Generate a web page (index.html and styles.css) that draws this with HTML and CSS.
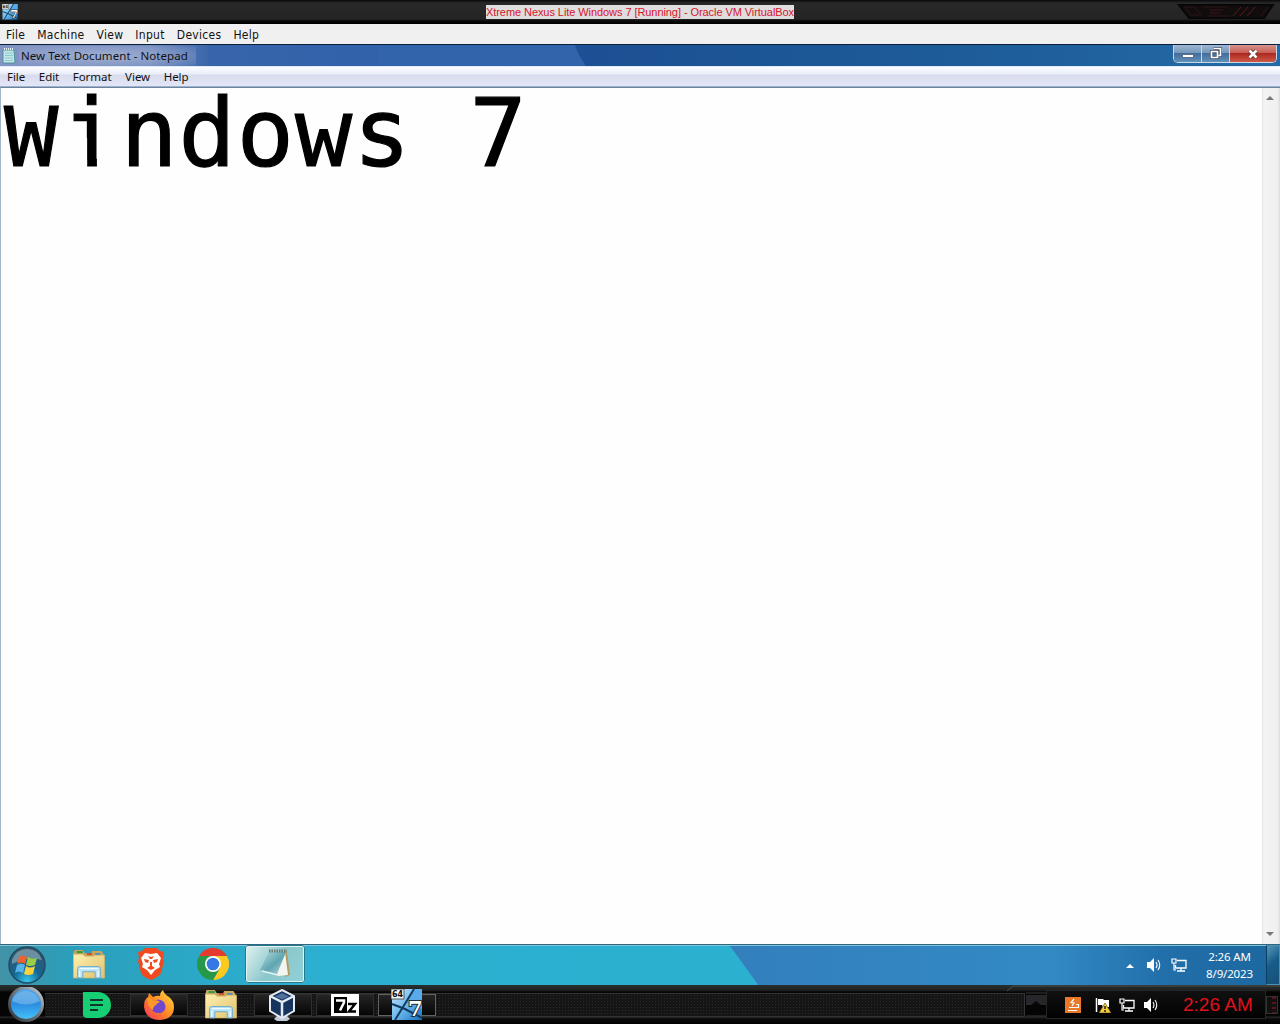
FILE: index.html
```html
<!DOCTYPE html>
<html lang="en">
<head>
    <meta charset="UTF-8">
    <title>Xtreme Nexus Lite Windows 7 [Running] - Oracle VM VirtualBox</title>
    <link rel="stylesheet" href="styles.css">
</head>
<body>
    <!-- Shared icons -->
    <svg class="defs" width="0" height="0">
        <defs>
            <linearGradient id="folder" x1="0" y1="0" x2="1" y2="1">
                <stop offset="0" stop-color="#fff0ae"/><stop offset="1" stop-color="#dfc170"/>
            </linearGradient>
            <linearGradient id="vm" x1="0" y1="0" x2="1" y2="1">
                <stop offset="0" stop-color="#c4e6fb"/><stop offset=".5" stop-color="#6db9ee"/><stop offset="1" stop-color="#1670bd"/>
            </linearGradient>
            <radialGradient id="orb" cx=".5" cy=".95" r=".9">
                <stop offset="0" stop-color="#35c8ef"/><stop offset=".45" stop-color="#146391"/><stop offset="1" stop-color="#37576b"/>
            </radialGradient>
            <linearGradient id="ball" x1="0" y1="0" x2="0" y2="1">
                <stop offset="0" stop-color="#5aa9e8"/><stop offset=".5" stop-color="#2c8de0"/><stop offset="1" stop-color="#48c6fa"/>
            </linearGradient>
            <linearGradient id="ring" x1="0" y1="1" x2="1" y2="0">
                <stop offset="0" stop-color="#2c3339"/><stop offset=".6" stop-color="#777f85"/><stop offset="1" stop-color="#d2d2d2"/>
            </linearGradient>
            <linearGradient id="fire" x1="1" y1="0" x2="0" y2="1">
                <stop offset="0" stop-color="#ffe34a"/><stop offset=".5" stop-color="#ff8a23"/><stop offset="1" stop-color="#f5325b"/>
            </linearGradient>
            <linearGradient id="pad" x1="0" y1="0" x2="1" y2="1">
                <stop offset="0" stop-color="#b4dfe2"/><stop offset=".55" stop-color="#5fa5b0"/><stop offset="1" stop-color="#b4d9dc"/>
            </linearGradient>
            <symbol id="explorer" viewBox="0 0 32 30">
                <path d="M1 4l1-3h8l2 3h6l1-2h9l2 3v23H1z" fill="#c9a65a"/>
                <path d="M4 2h6v2H4z" fill="#2f9a47"/><path d="M14 4h5v2h-5z" fill="#d34b32"/><path d="M22 4h5v2h-5z" fill="#4489c9"/>
                <path d="M1 5h9l2 2h8l2-1h9v22H1z" fill="url(#folder)" stroke="#d5b76c" stroke-width=".7"/>
                <path d="M5 28v-9q0-2 2-2h18q2 0 2 2v9h-5v-6H10v6z" fill="#b9e3f6" stroke="#66a9d0" stroke-width=".9"/>
                <path d="M7 19h18M7 21v6M25 21v6" stroke="#eefaff" stroke-width="1.3" fill="none"/>
            </symbol>
            <symbol id="speaker" viewBox="0 0 16 14">
                <path d="M1 4h3l4-4v14l-4-4H1z" fill="#fff"/>
                <path d="M10 4q2 3 0 6M12 2q3.5 5 0 10" fill="none" stroke="#fff" stroke-width="1.1"/>
            </symbol>
            <symbol id="network" viewBox="0 0 16 14">
                <path d="M6 2.500h9v7.500H4.500V7M10 10v3M6 13h8" fill="none" stroke="#fff" stroke-width="1.3"/>
                <path d="M1 1h4v4H1zM3 5v7h2" fill="none" stroke="#fff" stroke-width="1.2"/>
            </symbol>
            <symbol id="vmtile" viewBox="0 0 32 32">
                <path d="M1 0h30v31H1z" fill="url(#vm)"/>
                <path d="M23 0h8v20l-16-6z" fill="#58abe8"/>
                <path d="M23 0L12 18 4 31M1 15l13 5 17 9" stroke="#123b61" stroke-width="2" fill="none"/>
                <path d="M0 0h13v10H0z" fill="#f5f5f5" stroke="#555"/>
                <text x="1" y="8.300" class="bits">64</text>
                <text x="17" y="27" class="seven">7</text>
            </symbol>
        </defs>
    </svg>

    <div class="host-title">
        <svg class="host-icon" width="16" height="16"><use href="#vmtile"/></svg>
        <span class="caption">Xtreme Nexus Lite Windows 7 [Running] - Oracle VM VirtualBox</span>
        <svg class="host-buttons" width="103" height="18" viewBox="0 0 103 18" fill="none">
            <path d="M2 2h94l-9 13H12z" fill="#120d0d" stroke="#080808" stroke-width="2"/>
            <path d="M8 4l6 8h10l-7-8zM26 4h24M31 13h22M91 4l-7 9" stroke="#2d1518"/>
            <path d="M33 7h13M33 10h10" stroke="#3f171b"/>
            <path d="M56 13l8-9M63 13l8-9M70 13l8-9" stroke="#5c171c"/>
        </svg>
    </div>
    <div class="host-menu">
        <span>File</span><span>Machine</span><span>View</span><span>Input</span><span>Devices</span><span>Help</span>
    </div>

    <div class="np-title">
        <svg class="np-icon" width="14" height="16" viewBox="0 0 14 16">
            <path d="M1 2h11l1 13H1z" fill="#c3e7e9" stroke="#528f9d"/>
            <path d="M3 5h8M3 7.500h8M3 10h8M3 12.500h8" stroke="#8cc8ce"/>
            <path d="M2 1h10" stroke="#e6f5f2" stroke-width="2" stroke-dasharray="1 1"/>
        </svg>
        <span class="np-caption">New Text Document - Notepad</span>
        <svg class="np-shape" width="210" height="21">
            <path d="M0 0h197q3 10 11 21H0z" fill="#3264ab"/>
        </svg>
        <div class="np-buttons">
            <span class="btn"><svg width="12" height="12"><path d="M.5 6.500h11v3H.5z" fill="#fff" stroke="#4b5b70" stroke-width=".8"/></svg></span>
            <span class="btn"><svg width="14" height="14"><path d="M4.500 1.500h7v7h-2M2.500 4.500h6v6h-6z" fill="none" stroke="#3c4e64" stroke-width="3"/><path d="M4.500 1.500h7v7h-2M2.500 4.500h6v6h-6z" fill="none" stroke="#fff" stroke-width="1.700"/></svg></span>
            <span class="btn close"><svg width="14" height="12"><path d="M3.500 2.500l7 7M10.500 2.500l-7 7" stroke="#5c3436" stroke-width="4"/><path d="M3.500 2.500l7 7M10.500 2.500l-7 7" stroke="#fff" stroke-width="2.500"/></svg></span>
        </div>
    </div>
    <div class="np-menu">
        <span>File</span><span>Edit</span><span>Format</span><span>View</span><span>Help</span>
    </div>
    <div class="np-body">
        <div class="text"><span class="cap">W</span><span class="stem">i</span>ndows 7</div>
        <div class="scrollbar">
            <svg width="8" height="5"><path d="M0 5l4-4 4 4z" fill="#777"/></svg>
            <svg width="8" height="5"><path d="M0 0l4 4 4-4z" fill="#777"/></svg>
        </div>
    </div>

    <div class="guest-bar">
        <svg class="start" width="38" height="38" viewBox="0 0 38 38">
            <circle cx="19" cy="19" r="18" fill="url(#orb)" stroke="#214b63" stroke-width="1.500"/>
            <path d="M4 14Q8 3 19 3t15 11Q19 10 4 18z" fill="#b8d1da" opacity=".45"/>
            <path d="M11 11q4-3 8 0l-2 7q-4-3-8 0z" fill="#ed6330"/>
            <path d="M20 11q4 3 9 1l-2 7q-5 2-9 0z" fill="#9ccc42"/>
            <path d="M9 19q4-3 8 0l-2 8q-4-3-8 0z" fill="#57b3e8"/>
            <path d="M18 20q4 3 9 0l-2 8q-5 2-9 0z" fill="#fbd13c"/>
        </svg>
        <div class="tasks">
            <span class="task"><svg width="34" height="31"><use href="#explorer"/></svg></span>
            <span class="task">
                <svg width="28" height="32" viewBox="0 0 28 32">
                    <path d="M8 0h12l3 3 4 1-1 6 1 3-3 12q-2 4-10 7-8-3-10-7L1 13l1-3-1-6 4-1z" fill="#f04a20"/>
                    <path d="M8 5l6 1 6-1 4 5-2 6 1 3-5 3-4 5-4-5-5-3 1-3-2-6z" fill="#fff"/>
                    <path d="M7 11l5 1-1 3-3-1zM21 11l-5 1 1 3 3-1zM10 20l3-2v-4h2v4l3 2-4 2zM11 8l3 1 3-1-2 3h-2z" fill="#f04a20"/>
                </svg>
            </span>
            <span class="task">
                <svg width="32" height="32" viewBox="0 0 32 32">
                    <path d="M16 16L2.140 8A16 16 0 0 1 29.860 8z" fill="#e33b2e"/>
                    <path d="M16 16V8h13.860A16 16 0 0 1 16 32l7-12z" fill="#fcc91f"/>
                    <path d="M2.140 8A16 16 0 0 0 16 32l6.930-12L16 16 9.070 20z" fill="#279847"/>
                    <path d="M2.140 8L9.070 20 16 8z" fill="#279847"/>
                    <circle cx="16" cy="16" r="8" fill="#fff"/><circle cx="16" cy="16" r="6.300" fill="#3478e5"/>
                </svg>
            </span>
            <span class="task active">
                <svg width="34" height="32" viewBox="0 0 34 32">
                    <path d="M27 4h2l3 23-5 2z" fill="#b39c64"/>
                    <path d="M27 4l3 23-10 1-1-4z" fill="#f3f6ef"/>
                    <path d="M11 4h17l-9 22L2 22z" fill="url(#pad)"/>
                    <path d="M11 3h18" stroke="#68796f" stroke-width="3" stroke-dasharray="1.500 1"/>
                    <path d="M4 23l16 4" stroke="#e4f3f3" stroke-width="1.500"/>
                </svg>
            </span>
        </div>
        <svg class="wedge" width="550" height="40"><path d="M0 0h550v40H29z" fill="url(#wall)"/>
            <defs><linearGradient id="wall"><stop offset="0" stop-color="#337fbd"/><stop offset=".58" stop-color="#328ac4"/><stop offset=".8" stop-color="#216ea9"/><stop offset="1" stop-color="#1c679f"/></linearGradient></defs>
        </svg>
        <div class="tray">
            <svg width="8" height="5"><path d="M0 5l4-4 4 4z" fill="#fff"/></svg>
            <svg width="16" height="14"><use href="#speaker"/></svg>
            <svg width="16" height="14"><use href="#network"/></svg>
            <div class="clock"><span>2:26 AM</span><span>8/9/2023</span></div>
            <div class="show-desktop"></div>
        </div>
    </div>

    <div class="host-bar">
        <svg class="host-start" width="38" height="36" viewBox="0 0 38 36">
            <circle cx="19" cy="17" r="16.500" fill="url(#ball)" stroke="url(#ring)" stroke-width="3"/>
            <path d="M5 14Q9 4 19 4t14 10q-14 7-28 0z" fill="#8cc3ee" opacity=".5"/>
        </svg>
        <div class="strip">
            <span class="slot plain">
                <svg width="30" height="28" viewBox="0 0 30 28">
                    <path d="M1 1h15a13 13 0 0 1 0 26H5q-4 0-4-4z" fill="#16cf74"/>
                    <path d="M8 9h13M8 14h13M8 19h8" stroke="#10382a" stroke-width="2"/>
                </svg>
            </span>
            <span class="slot">
                <svg width="32" height="32" viewBox="0 0 32 32">
                    <path d="M5 8l1-4 4 4q4-2 7-1 0-4 3-6 1 4 6 7 5 4 5 10 0 12-14 13Q3 31 1 18 1 10 5 8z" fill="url(#fire)"/>
                    <path d="M10 13q5-5 11 0 4 8-3 11-10 1-10-7z" fill="#7048cf"/>
                    <path d="M4 9q5 0 6 3 4-2 7 1-3 1-4 3-3 1-3 5-5-2-6-12z" fill="#ff9827"/>
                </svg>
            </span>
            <span class="slot plain"><svg width="34" height="31"><use href="#explorer"/></svg></span>
            <span class="slot">
                <svg class="vbox" width="28" height="32" viewBox="0 0 28 32">
                    <path d="M9 27h10l3 3-3 2H9l-3-2z" fill="#c0cbd6"/>
                    <path d="M14 1l12 6v15l-12 7-12-7V7z" fill="#17345f" stroke="#e3eaf1" stroke-width="2"/>
                    <path d="M2 7l12 6 12-6M14 13v16" fill="none" stroke="#e3eaf1" stroke-width="2.500"/>
                    <path d="M14 4l7 3.500-7 3-7-3z" fill="#4f719d"/>
                </svg>
            </span>
            <span class="slot">
                <svg width="28" height="22" viewBox="0 0 28 22">
                    <path d="M0 0h28v22H0z" fill="#fff"/><path d="M3 3h13v16H3z" fill="#000"/>
                    <path d="M17 10h7l-6 7.500h7" fill="none" stroke="#000" stroke-width="2.500"/>
                    <path d="M5 6.500h8v2l-4 8" fill="none" stroke="#fff" stroke-width="2.500"/>
                </svg>
            </span>
            <span class="slot current"><svg width="32" height="32"><use href="#vmtile"/></svg></span>
        </div>
        <svg class="gap-art" width="20" height="26" viewBox="0 0 20 26"><path d="M0 1h20M0 24h20" stroke="#39393b"/><path d="M0 3h20v10H0z" fill="#27272b"/><path d="M4 14l6-5 6 5z" fill="#070707"/></svg>
        <div class="host-tray">
            <svg width="16" height="16"><path d="M0 0h16v16H0z" fill="#e97828"/><path d="M9 2L6 5.500l3 .5-2 3M4 10.500h7M3 13.500h9M11 7.500h2.500v3H11" fill="none" stroke="#fff" stroke-width="1.200"/></svg>
            <svg width="16" height="16"><path d="M1.500 1v14" stroke="#fff" stroke-width="1.500"/><path d="M3 2h5l1 1h5v7H8L7 8H3z" fill="#fff"/><path d="M10 6l6 10H4z" fill="#f5ca3c" stroke="#75601b" stroke-width=".7"/><path d="M10 9v3M10 13v2" stroke="#222" stroke-width="1.500"/></svg>
            <svg width="16" height="14"><use href="#network"/></svg>
            <svg width="16" height="14"><use href="#speaker"/></svg>
            <span class="host-clock">2:26 AM</span>
        </div>
        <div class="host-end"></div>
        <svg class="notch" width="290" height="7" viewBox="0 0 290 7"><path d="M0 6l6-5h284" fill="none" stroke="#4b504e"/></svg>
    </div>
</body>
</html>
```

FILE: styles.css
```css
body {
    margin: 0;
    width: 1280px;
    height: 1024px;
    display: flex;
    flex-direction: column;
    overflow: hidden;
    background-color: #fefefe;
    font-family: "Noto Sans", "Open Sans", sans-serif;
    font-size: 12px;
    color: #111;
}

* {
    box-sizing: border-box;
}

svg {
    display: block;
    flex-shrink: 0;
}

.defs {
    position: absolute;
}

.seven {
    font: bold 21px "DejaVu Serif", serif;
    fill: #fff;
    stroke: #1b2c3c;
    stroke-width: 2px;
    paint-order: stroke;
}

.bits {
    font: bold 8px "DejaVu Sans", sans-serif;
    fill: #111;
}

/* Host window */
.host-title {
    height: 24px;
    display: grid;
    grid-template-columns: 1fr auto 1fr;
    align-items: center;
    padding: 0 0 0 2px;
    background: linear-gradient(#080808, #282828 3px, #252525 19px, #080808 21px, #000);
}

.caption {
    font: 11px/14px "Liberation Sans", Arial, sans-serif;
    width: 308px;
    margin-left: -2px;
    white-space: nowrap;
    letter-spacing: -0.07px;
    color: #d9142c;
    background-color: #dedede;
}

.host-buttons {
    justify-self: end;
}

.host-menu {
    height: 20px;
    display: flex;
    gap: 12px;
    padding-left: 6px;
    background-color: #f1f0f0;
    font-family: "DejaVu Sans Condensed", "DejaVu Sans", sans-serif;
    font-stretch: condensed;
    line-height: 22px;
    letter-spacing: 0.3px;
}

/* Notepad */
.np-title {
    position: relative;
    height: 22px;
    display: flex;
    align-items: center;
    padding-left: 2px;
    border-top: 1px solid #0b1e3b;
    background: linear-gradient(90deg, #8295c3 0, #7189bc 150px, #3865aa 210px, #3162aa 370px, #1c5094 590px, #1d5c97 960px, #246aa6);
}

.np-shape {
    position: absolute;
    left: 378px;
    top: 0;
}

.np-icon {
    z-index: 1;
}

.np-caption {
    margin-left: 3px;
    padding: 0 8px 0 2px;
    font-size: 11.5px;
    line-height: 20px;
    letter-spacing: 0.06px;
    background: radial-gradient(ellipse, rgba(178, 189, 218, 0.7), rgba(140, 160, 203, 0.1));
}

.np-buttons {
    display: flex;
    align-self: flex-start;
    height: 18px;
    margin: 0 3px 0 auto;
    border: 1px solid #c7d8e8;
    border-top: 0;
    border-radius: 0 0 5px 5px;
    overflow: hidden;
    z-index: 1;
}

.btn {
    width: 28px;
    display: flex;
    align-items: center;
    justify-content: center;
    border-right: 1px solid #c7d8e8;
    background: linear-gradient(#9db7d2, #7798bb 45%, #436d9c 50%, #6291b9);
}

.btn.close {
    width: 46px;
    border-right: 0;
    background: linear-gradient(#d6948d, #c85f55 45%, #ad2920 50%, #cf5947);
}

.np-menu {
    height: 21px;
    display: flex;
    gap: 13.6px;
    padding-left: 7px;
    border-top: 1px solid #dfe9f8;
    background: linear-gradient(#fcfdff, #e9edf8 7px, #d8dced 8px, #e3e6f6);
    border-bottom: 1px solid #9bb1cc;
    font-size: 11.5px;
    line-height: 20px;
    letter-spacing: -0.05px;
}

.np-body {
    height: 857px;
    display: flex;
    justify-content: space-between;
    border-left: 1px solid #9fb5c8;
    border-top: 1px solid #6c829d;
    background-color: #fefefe;
}

.text {
    padding-left: 3px;
    font: 95px/91px "DejaVu Sans Mono", monospace;
    letter-spacing: 1px;
    -webkit-text-stroke: 1.2px #000;
    color: #000;
    white-space: pre;
}

/* Low capital sitting on the same baseline */
.cap {
    display: inline-block;
    transform: scale(0.95, 0.86);
    transform-origin: 0 79px;
}

/* Plain stem, the foot is cut away */
.stem {
    display: inline-block;
    clip-path: polygon(0 -10px, 34.7px -10px, 34.7px 100%, 25px 100%, 25px 50px, 0 50px);
}

.scrollbar {
    width: 18px;
    display: flex;
    flex-direction: column;
    align-items: center;
    justify-content: space-between;
    padding: 7px 2px 7px 0;
    background: linear-gradient(90deg, #e5e5e5, #f3f3f3 2px, #efefef 16px, #d8e0e5 17px);
}

/* Guest taskbar */
.guest-bar {
    position: relative;
    height: 41px;
    display: flex;
    align-items: center;
    padding-left: 8px;
    border-top: 1px solid #32667e;
    box-shadow: inset 0 1px #7fc5da;
    background: linear-gradient(90deg, #4292a7, #2a9fbc 75px, #2cafd0 290px, #2bb2d2);
}

.wedge {
    position: absolute;
    right: 0;
    top: 1px;
}

.tasks {
    display: flex;
    gap: 2px;
    margin-left: 13px;
    margin-bottom: 2px;
}

.task {
    width: 60px;
    height: 38px;
    display: flex;
    align-items: center;
    justify-content: center;
}

.task.active {
    height: 38px;
    border: 1px solid #e7f8f8;
    border-radius: 3px;
    outline: 1px solid #25778b;
    outline-offset: -1px;
    box-shadow: inset 0 0 0 1px #e2f5f5;
    background: linear-gradient(125deg, #e2f1ef, #8ac7cb 50%, #91d1d7);
}

.tray {
    z-index: 1;
    margin-left: auto;
    height: 40px;
    display: flex;
    align-items: center;
}

.tray svg {
    margin-right: 9px;
}

.tray svg:first-child {
    margin-right: 12px;
}

.clock {
    width: 63px;
    margin: 0 5px 0 2px;
    display: flex;
    flex-direction: column;
    align-items: center;
    font-size: 11.5px;
    line-height: 17px;
    letter-spacing: -0.15px;
    color: #fff;
}

.show-desktop {
    width: 14px;
    height: 40px;
    border: 1px solid #4c91b5;
    border-left-color: #103e61;
    background: linear-gradient(135deg, #5897b9, #165d8b 45%, #174f77);
}

/* Host taskbar */
.host-bar {
    position: relative;
    height: 39px;
    display: flex;
    align-items: center;
    padding-left: 7px;
    background: linear-gradient(#292e2e, #202322 5px, #050505 7px, #050505 31px, #292929 32px, #090909 34px, #000);
}

.strip {
    width: 980px;
    height: 24px;
    display: flex;
    align-items: center;
    gap: 4px;
    padding-left: 23px;
    border: 1px solid #343434;
    border-left: 0;
    background-color: #151515;
    background-image: radial-gradient(#292929 0.7px, transparent 0.8px);
    background-size: 3px 3px;
}

.slot {
    width: 58px;
    height: 22px;
    display: flex;
    align-items: center;
    justify-content: center;
    border: 1px solid #2e2e2e;
    background: linear-gradient(#252525, #141414 50%, #060606);
}

.slot.plain {
    border: 0;
    background: none;
}

.slot.current {
    border-color: #626262;
}

.vbox {
    margin-right: 2px;
}

.gap-art {
    margin-left: 1px;
}

.host-tray {
    width: 220px;
    height: 29px;
    display: flex;
    align-items: center;
    padding-left: 18px;
    border: 1px solid #252626;
    background: linear-gradient(#101010, #020202);
}

.host-tray svg {
    margin-right: 8px;
}

.host-tray svg:first-child {
    margin-right: 14px;
}

.host-clock {
    margin-left: 16px;
    white-space: nowrap;
    font: 19px "Liberation Sans", Arial, sans-serif;
    letter-spacing: 0;
    color: #e0101c;
}

.host-end {
    width: 12px;
    height: 18px;
    border: 1px solid #333;
    background: repeating-linear-gradient(#621019 0 2px, #111 2px 5px) 5px 0 / 4px 100% no-repeat #111;
}

.notch {
    position: absolute;
    left: 1007px;
    top: 0;
}
```
